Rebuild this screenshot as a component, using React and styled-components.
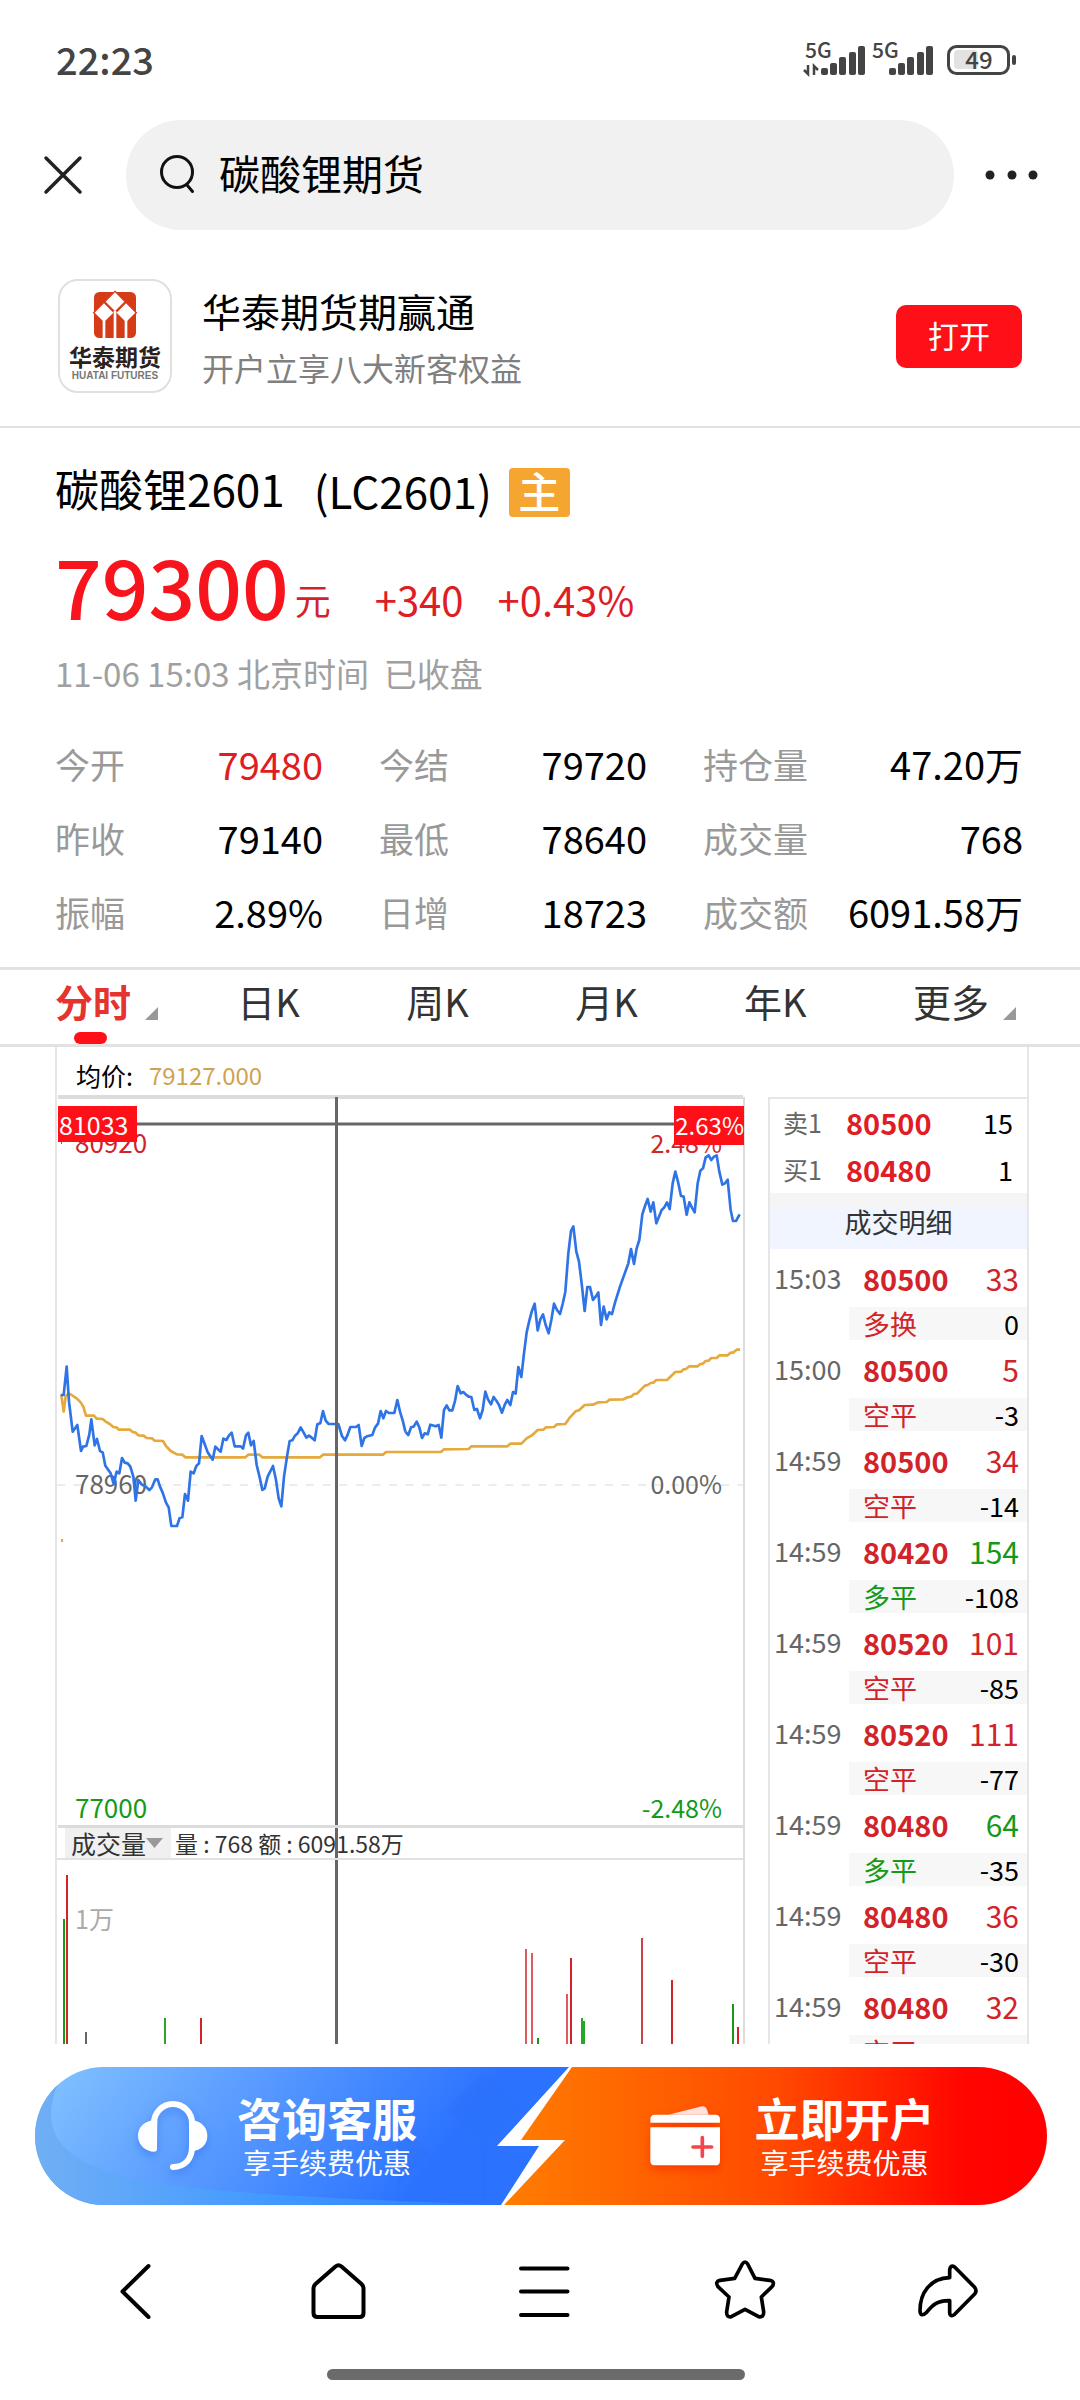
import React, {useState} from 'react';
import styled, {createGlobalStyle} from 'styled-components';

const GlobalStyle = createGlobalStyle`
  * {
    box-sizing: border-box;
  }
  body {
    margin: 0;
    background: #fff;
    color: #000;
    font-family: "Noto Sans CJK SC", "Noto Sans", sans-serif;
  }
  button, input, select {
    font-family: inherit;
    color: inherit;
    border: 0;
    padding: 0;
    margin: 0;
    background: none;
    outline: none;
  }
  svg {
    display: block;
    overflow: visible;
  }
`;

const RED = '#d2232a';
const GREEN = '#149a17';
const LINE = '#e2e2e2';

const Page = styled.div`
  display: flex;
  flex-direction: column;
  height: 100vh;
  overflow: hidden;
`;

/* ---------- top ---------- */

const StatusBar = styled.div`
  display: flex;
  flex: none;
  align-items: center;
  justify-content: space-between;
  height: 116px;
  padding: 2px 63px 0 56px;
  font-size: 38px;
  font-weight: 500;
  line-height: 40px;
  color: #444;
`;

const SearchRow = styled.header`
  display: flex;
  flex: none;
  align-items: center;
  margin-top: 4px;
  padding: 0 42px 0 44px;
`;

const IconButton = styled.button`
  flex: none;
  cursor: pointer;
`;

const SearchBox = styled.label`
  display: flex;
  flex: 1;
  align-items: center;
  gap: 24px;
  height: 110px;
  margin: 0 31px 0 44px;
  padding: 0 34px;
  border-radius: 55px;
  background: #f1f1f1;
`;

const SearchInput = styled.input`
  flex: 1;
  min-width: 0;
  height: 66px;
  padding-bottom: 6px;
  font-size: 41px;
  line-height: 60px;
`;

const Promo = styled.section`
  display: flex;
  flex: none;
  align-items: center;
  padding: 49px 58px 33px;
  border-bottom: 2px solid ${LINE};
`;

const LogoCard = styled.div`
  display: flex;
  flex-direction: column;
  align-items: center;
  width: 114px;
  height: 114px;
  padding-top: 11px;
  border: 2px solid #e0e0e0;
  border-radius: 20px;
`;

const LogoName = styled.span`
  margin-top: 5px;
  font-size: 23px;
  font-weight: 700;
  line-height: 26px;
  white-space: nowrap;
  color: #2b2120;
`;

const LogoSub = styled.span`
  font: bold 10px/14px "Liberation Sans", sans-serif;
  white-space: nowrap;
  color: #777;
`;

const PromoText = styled.div`
  flex: 1;
  margin-left: 30px;
`;

const PromoTitle = styled.div`
  font-size: 39px;
  line-height: 62px;
`;

const PromoSub = styled.div`
  font-size: 32px;
  line-height: 52px;
  color: #808080;
`;

const OpenButton = styled.button`
  width: 126px;
  height: 63px;
  padding-bottom: 3px;
  border-radius: 10px;
  background: #ff1018;
  color: #fff;
  font-size: 31px;
  line-height: 60px;
  cursor: pointer;
`;

/* ---------- quote ---------- */

const Quote = styled.section`
  flex: none;
  padding: 40px 57px 18px 55px;
  border-bottom: 3px solid ${LINE};
`;

const Title = styled.h1`
  display: flex;
  align-items: center;
  height: 49px;
  margin: 0;
  font-size: 44px;
  font-weight: 400;
  line-height: 48px;
`;

const Name = styled.span`
  padding-bottom: 10px;
`;

const Code = styled.span`
  margin: 0 17px 0 29px;
  padding-bottom: 6px;
`;

const MainTag = styled.span`
  width: 61px;
  height: 49px;
  border-radius: 4px;
  background: #f5a631;
  color: #fff;
  font-size: 42px;
  font-weight: 500;
  line-height: 44px;
  text-align: center;
`;

const PriceRow = styled.div`
  display: flex;
  align-items: flex-end;
  height: 100px;
  margin-top: 18px;
  color: ${RED};
`;

const Price = styled.span`
  font-size: 82px;
  font-weight: 500;
  line-height: 100px;
  color: #f8141d;
`;

const Delta = styled.span`
  margin: 0 0 16px ${p => p.$gap}px;
  font-size: ${p => p.$size || 40}px;
  line-height: 40px;
  color: ${p => p.$size ? RED : '#e01c24'};
`;

const Stamp = styled.p`
  margin: 18px 0 34px;
  font-size: 33px;
  line-height: 40px;
  color: #a0a0a0;
`;

const Stats = styled.dl`
  display: grid;
  grid-template-columns: 268fr 268fr 320fr;
  column-gap: 56px;
  margin: 0;
`;

const Stat = styled.div`
  display: flex;
  align-items: center;
  justify-content: space-between;
  height: 74px;
  line-height: 74px;
  white-space: nowrap;

  dt {
    font-size: 35px;
    color: #999;
  }
  dd {
    margin: 0;
    font-size: 38px;
    color: ${p => p.$up ? '#e01c24' : '#000'};
  }
`;

/* ---------- tabs ---------- */

const Tabs = styled.nav`
  display: flex;
  flex: none;
  justify-content: space-between;
  height: 77px;
  padding: 0 91px 0 55px;
  border-bottom: 3px solid ${LINE};
`;

const Tab = styled.button`
  position: relative;
  height: 74px;
  padding-bottom: 12px;
  font-size: 38px;
  font-weight: ${p => p.$active ? 700 : 400};
  line-height: 60px;
  color: ${p => p.$active ? '#e5332d' : '#333'};
  cursor: pointer;

  &::after {
    content: "";
    display: ${p => p.$active ? 'block' : 'none'};
    position: absolute;
    left: 19px;
    bottom: 0;
    width: 33px;
    height: 12px;
    border-radius: 6px;
    background: #ff1018;
  }
`;

const Corner = styled.svg`
  position: absolute;
  right: -27px;
  bottom: 24px;
`;

/* ---------- chart area ---------- */

const Board = styled.main`
  flex: 1;
  min-height: 0;
  margin: 0 51px 0 55px;
  overflow: hidden;
  border: solid #e6e6e6;
  border-width: 0 2px;
`;

const Average = styled.div`
  display: flex;
  gap: 16px;
  height: 50px;
  padding-left: 19px;
  font-size: 25px;
  line-height: 56px;

  b {
    font-size: 24px;
    font-weight: 400;
    color: #cfa24f;
  }
`;

const Columns = styled.div`
  display: grid;
  grid-template-columns: 688fr 259fr;
  column-gap: 23px;
  align-items: stretch;
`;

const ChartPane = styled.div`
  border-right: 2px solid #dcdcdc;

  > svg {
    width: 100%;
    height: auto;
  }
`;

const VolumeBar = styled.div`
  display: flex;
  align-items: center;
  height: 32px;
  border-bottom: 2px solid ${LINE};
  font-size: 23px;
  line-height: 30px;
  color: #333;
  background: linear-gradient(#666, #666) 278px 0 / 3px 100% no-repeat;
`;

const IndicatorPick = styled.label`
  display: flex;
  align-items: center;
  width: 106px;
  height: 30px;
  margin: 0 4px 0 8px;
  padding-left: 6px;
  background: #f0f0f0;

  select {
    width: 75px;
    height: 30px;
    appearance: none;
    font-size: 25px;
    line-height: 30px;
  }
`;

const Depth = styled.aside`
  border: solid #e6e6e6;
  border-width: 2px 0 0 2px;
`;

const Orders = styled.table`
  width: 100%;
  table-layout: fixed;
  border-collapse: collapse;
  font-size: 27px;

  th, td {
    padding: 0;
    font-weight: 400;
    text-align: left;
    white-space: nowrap;
  }
`;

const BookRow = styled.tr`
  height: 47px;
  line-height: 47px;

  th {
    width: 76px;
    padding-left: 13px;
    font-size: 25px;
    color: #666;
  }
  td:last-child {
    padding-right: 14px;
    text-align: right;
  }
`;

const BookPrice = styled.td`
  && {
    font-size: 29px;
    font-weight: 700;
    color: #e01c24;
  }
`;

const DetailHead = styled.h2`
  margin: 0;
  height: 56px;
  border-top: 15px solid #f5f5f5;
  background: #f0f5ff;
  font-size: 27px;
  font-weight: 400;
  line-height: 28px;
  text-align: center;
  color: #333;
`;

const DealRow = styled.tr`
  height: 58px;
  line-height: 56px;

  th {
    width: 79px;
    padding-left: 4px;
    color: #666;
  }
  td {
    padding-left: 14px;
    font-size: 29px;
    font-weight: 700;
    color: ${RED};
  }
  td:last-child {
    padding: 0 8px 0 0;
    font-size: 30px;
    font-weight: 400;
    text-align: right;
    color: ${p => p.$down ? GREEN : RED};
  }
`;

const KindRow = styled.tr`
  height: 33px;
  line-height: 32px;

  td + td {
    padding-left: 14px;
    background: #f7f7f7;
    color: ${p => p.$down ? GREEN : RED};
  }
  td:last-child {
    padding: 0 8px 0 0;
    text-align: right;
    color: #000;
  }
`;

/* ---------- bottom ---------- */

const Banner = styled.div`
  position: relative;
  display: flex;
  flex: none;
  height: 138px;
  margin: 23px 33px 0 35px;
  border-radius: 69px;
  overflow: hidden;
`;

const BannerArt = styled.svg`
  position: absolute;
  inset: 0;
  width: 100%;
  height: 100%;
`;

const BannerButton = styled.button`
  position: relative;
  display: flex;
  flex: 1;
  align-items: center;
  gap: ${p => p.$gap}px;
  padding-left: ${p => p.$start}px;
  color: #fff;
  white-space: nowrap;
  cursor: pointer;

  strong, small {
    display: block;
  }
  strong {
    padding-top: 4px;
    font-size: 45px;
    font-weight: 700;
    line-height: 48px;
  }
  small {
    font-size: 28px;
    line-height: 40px;
  }
  svg {
    filter: drop-shadow(0 4px 5px ${p => p.$shadow});
  }
`;

const NavBar = styled.nav`
  display: flex;
  flex: none;
  justify-content: space-between;
  margin-top: 55px;
  padding: 0 102px 0 105px;
`;

const HomeBar = styled.div`
  flex: none;
  width: 418px;
  height: 11px;
  margin: 49px 0 20px calc(50% - 213px);
  border-radius: 6px;
  background: #6b6b6b;
`;

/* ---------- data ---------- */

const stats = [
    ['今开', '79480', true], ['今结', '79720'], ['持仓量', '47.20万'],
    ['昨收', '79140'], ['最低', '78640'], ['成交量', '768'],
    ['振幅', '2.89%'], ['日增', '18723'], ['成交额', '6091.58万'],
];

const tabs = ['分时', '日K', '周K', '月K', '年K', '更多'];

const deals = [
    ['15:03', '80500', '33', '多换', '0'],
    ['15:00', '80500', '5', '空平', '-3'],
    ['14:59', '80500', '34', '空平', '-14'],
    ['14:59', '80420', '154', '多平', '-108', true],
    ['14:59', '80520', '101', '空平', '-85'],
    ['14:59', '80520', '111', '空平', '-77'],
    ['14:59', '80480', '64', '多平', '-35', true],
    ['14:59', '80480', '36', '空平', '-30'],
    ['14:59', '80480', '32', '空平', '-19'],
];

// both sessions are sampled at three units per pixel, each from its own origin
const MORNING = 'scale(.33333) translate(-21 -51)';
const AFTERNOON = 'scale(.33333) translate(1029 -51)';

const priceAm = '32,945 41,945 50,860 57,965 68,1055 82,1035 93,1113 99,1100 109,1098 118,1063 124,1018 134,1096 141,1077 150,1113 158,1117 166,1157 182,1180 191,1212 200,1175 208,1180 216,1134 224,1148 233,1150 241,1160 250,1190 257,1262 265,1200 275,1213 290,1222 298,1230 306,1222 316,1198 323,1198 330,1220 338,1238 348,1268 356,1282 364,1338 381,1338 389,1314 397,1312 405,1242 414,1262 422,1175 431,1180 439,1158 447,1150 455,1068 464,1092 473,1117 488,1139 496,1100 512,1115 520,1076 529,1080 537,1066 545,1058 554,1099 572,1099 579,1106 588,1066 595,1058 603,1096 611,1083 620,1155 629,1192 637,1230 644,1225 653,1190 669,1158 678,1200 686,1255 694,1279 702,1190 711,1130 719,1083 727,1081 735,1067 743,1060 752,1042 761,1058 769,1073 777,1067 785,1073 794,1081 802,1033 811,1030 819,993 827,1022 836,1032 865,1032 876,1068 885,1081 893,1064 901,1041 918,1041 926,1035 935,1098 943,1074 951,1069 967,1065 975,1043 984,1031 992,993 1000,1015 1008,993 1017,999 1033,999 1042,960 1050,995 1059,1025 1066,1055';
const pricePm = '16,1055 25,1065 33,1042 41,1040 50,1025 58,1042 66,1074 74,1060 83,1063 91,1034 107,1039 116,1035 124,1073 132,990 140,976 148,991 157,991 165,963 173,918 182,940 190,936 198,944 206,950 214,951 223,990 231,987 240,1015 248,990 256,935 264,958 273,973 281,951 289,962 297,975 306,998 314,975 322,960 331,975 339,936 347,941 355,861 364,891 372,820 380,757 388,722 396,692 404,671 413,751 421,718 429,703 437,735 446,760 454,720 462,671 471,690 480,702 488,672 496,635 505,520 513,453 520,439 529,515 537,545 545,610 554,693 562,621 570,621 579,660 587,650 595,637 603,735 611,680 620,718 628,697 636,702 645,668 660,620 685,550 693,507 702,552 710,505 718,480 727,403 735,378 743,357 752,395 760,367 769,430 785,390 793,382 801,367 809,387 818,310 826,275 834,305 843,348 851,350 860,404 868,367 876,383 884,397 893,310 901,272 909,265 917,232 926,226 934,240 942,230 950,226 958,275 967,314 975,310 983,299 992,390 999,423 1008,423 1019,403';
const avgAm = '34,945 41,995 47,950 55,940 65,945 80,955 92,967 100,980 108,1007 132,1007 140,1016 158,1017 166,1024 182,1034 190,1041 199,1042 207,1049 240,1049 248,1056 257,1058 265,1066 281,1067 290,1074 306,1075 314,1082 339,1083 348,1098 362,1113 381,1123 397,1124 406,1132 586,1132 595,1124 628,1124 637,1132 810,1132 819,1124 999,1124 1008,1116 1050,1116';
const avgPm = '0,1116 123,1116 132,1108 206,1107 214,1099 322,1099 331,1091 364,1091 380,1075 397,1065 413,1050 430,1049 438,1042 462,1041 471,1033 496,1032 510,1012 528,993 537,991 554,975 579,974 595,967 620,966 629,959 670,958 685,951 694,950 702,942 711,941 735,917 743,915 752,909 760,908 769,900 801,900 826,876 843,875 851,868 858,867 868,859 893,859 901,852 909,851 917,843 926,842 934,834 950,834 958,826 983,826 992,818 999,818 1010,809 1020,809';

// x, top, colour
const volumes = [
    [7, 59, GREEN], [10, 15, RED], [29, 172, '#666'], [108, 158, '#2aa52c'], [144, 158, RED],
    [469, 89, '#dd5a5f'], [475, 93, '#dd5a5f'], [481, 178, GREEN], [510, 134, '#dd5a5f'], [514, 98, RED],
    [525, 158, '#2aa52c'], [527, 161, '#2aa52c'], [585, 78, '#c94449'], [615, 120, RED],
    [676, 144, GREEN], [681, 167, RED],
];

/* ---------- drawings ---------- */

const Signal = ({x}) => (
    <g fill="#444">
        {[25, 20, 14, 9, 3].map((top, i) => (
            <rect key={top} x={x + i * 9 + (i > 2 ? 1 : 0)} y={top} width="7" height={32 - top} rx="2"/>
        ))}
    </g>
);

const StatusIcons = () => (
    <svg width="214" height="32" viewBox="0 0 214 32" fontWeight="500">
        <text x="2" y="15" fontSize="21" fill="#444">5G</text>
        <path d="M5 22v9l-4-4M11 32V23l4 4" fill="none" stroke="#444" strokeWidth="2.5"/>
        <Signal x={18}/>
        <text x="69" y="15" fontSize="21" fill="#444">5G</text>
        <Signal x={86}/>
        <rect x="151" y="7" width="24" height="19" rx="4" fill="#e2e2e2"/>
        <rect x="145.500" y="3.500" width="60" height="27" rx="8" fill="none" stroke="#444" strokeWidth="3"/>
        <rect x="209" y="12" width="4" height="10" rx="2" fill="#444"/>
        <text x="176" y="26" fontSize="24" textAnchor="middle" fill="#444">49</text>
    </svg>
);

const HuataiMark = () => (
    <svg width="42" height="46" viewBox="132 66 126 138">
        <rect x="132" y="66" width="126" height="138" rx="16" fill="#d63b17"/>
        <path d="M195 64l31 31-31 31-31-31zM162 97l31 31-31 31-31-31zM228 97l31 31-31 31-31-31z" fill="#fff" stroke="#d63b17" strokeWidth="4"/>
        <path d="M162 150v54M195 122v82M228 150v54" stroke="#fff" strokeWidth="8"/>
    </svg>
);

const PriceChart = () => (
    <svg viewBox="0 0 686 731" fontSize="26">
        <path d="M1 0H686" stroke="#dcdcdc" strokeWidth="4"/>
        <path d="M0 388H686" stroke="#ececec" strokeWidth="2" strokeDasharray="8 8.600"/>
        <text x="18" y="56" fill={RED}>80920</text>
        <text x="665" y="56" fontSize="25" textAnchor="end" fill={RED}>2.48%</text>
        <text x="18" y="397" fill="#666">78960</text>
        <text x="665" y="397" fontSize="25" textAnchor="end" fill="#666">0.00%</text>
        <text x="18" y="721" fill={GREEN}>77000</text>
        <text x="665" y="721" fontSize="25" textAnchor="end" fill={GREEN}>-2.48%</text>
        <path d="M4 442h2v3h-2z" fill="#e9a93a"/>
        <path d="M4 42h1v5h-1z" fill="#2f74e6"/>
        <g fill="none" strokeWidth="8" strokeLinejoin="round">
            <g stroke="#e5a93c">
                <polyline transform={MORNING} points={avgAm}/>
                <polyline transform={AFTERNOON} points={avgPm}/>
            </g>
            <g stroke="#2f74e6">
                <polyline transform={MORNING} points={priceAm}/>
                <polyline transform={AFTERNOON} points={pricePm}/>
            </g>
        </g>
        <path d="M1 27H686M279.500 0V731" stroke="#666" strokeWidth="3"/>
        <path d="M1 9h79v36h-79zM617 9h70v39h-70z" fill="#ff1018"/>
        <text x="2" y="38" fontSize="25" fill="#fff">81033</text>
        <text x="687" y="38" fontSize="24" textAnchor="end" fill="#fff">2.63%</text>
        <path d="M1 729.500H686" stroke="#dcdcdc" strokeWidth="3"/>
    </svg>
);

const VolumeChart = () => (
    <svg viewBox="0 0 686 260" fontSize="25">
        <text x="18" y="69" fill="#aaa">1万</text>
        {volumes.map(([x, top, color]) => (
            <rect key={x} x={x - 1} y={top} width="2" height={260 - top} fill={color}/>
        ))}
        <path d="M279.500 0V260" stroke="#666" strokeWidth="3"/>
    </svg>
);

const Headset = () => (
    <svg width="70" height="72" viewBox="325 121 210 216">
        <path d="M373 200V190A57 57 0 0 1 487 190V262C487 298 465 322 430 322" fill="none" stroke="#fff" strokeWidth="18" strokeLinecap="round"/>
        <path d="M383 180L370 181C340 187 325 205 325 228C325 258 350 275 373 276Q382 276 382 268ZM478 180L490 181C518 187 533 205 533 228C533 255 515 270 490 274L478 270Z" fill="#fff"/>
    </svg>
);

const Wallet = () => (
    <svg width="70" height="60" viewBox="330 140 210 180">
        <path d="M385 166L480 142Q496 138 501 151L506 166Z" fill="#ffe0dc"/>
        <path d="M331 190V180Q331 166 345 166H526Q540 166 540 180V190ZM331 204H540V304Q540 318 526 318H345Q331 318 331 304Z" fill="#fff"/>
        <path d="M459 263H515M487 235V291" stroke="#f5444c" strokeWidth="11" strokeLinecap="round"/>
    </svg>
);

const NavIcon = ({d, box = '0 0 60 60', stroke = 4}) => (
    <svg width="60" height="60" viewBox={box} fill="none" stroke="#000" strokeWidth={stroke} strokeLinecap="round" strokeLinejoin="round">
        <path d={d}/>
    </svg>
);

const navItems = [
    {label: '后退', d: 'M43.500 6L17.500 31.500L43.500 57'},
    {label: '主页', d: 'M27.500 6.500Q30.500 4 33.500 6.500L53.500 24Q55.500 26 55.500 28.500V53Q55.500 57 51.500 57H9.500Q5.500 57 5.500 53V28.500Q5.500 26 7.500 24Z'},
    {label: '菜单', d: 'M9 8.500H55.500M9 31.500H55.500M9 55H55.500'},
    {label: '收藏', box: '526 600 180 180', stroke: 11, d: 'M608 612Q616 600 624 612L646 655L690 661Q708 665 697 680L665 711L672 755Q673 773 657 770L616 748L575 770Q560 773 561 755L568 711L535 680Q525 665 541 661L585 655Z'},
    {label: '分享', box: '1135 600 180 180', stroke: 11, d: 'M1230 653V630Q1232 613 1245 621L1305 682Q1313 692 1305 702L1245 763Q1232 773 1230 758V722C1195 721 1180 733 1160 758Q1142 773 1141 752C1141 700 1170 655 1230 653Z'},
];

const App = () => {
    const [keyword, setKeyword] = useState('碳酸锂期货');
    const [active, setActive] = useState('分时');

    return (
        <Page>
            <GlobalStyle/>
            <StatusBar>
                <span>22:23</span>
                <StatusIcons/>
            </StatusBar>

            <SearchRow>
                <IconButton aria-label="关闭">
                    <svg width="38" height="38" viewBox="0 0 38 38" stroke="#222" strokeWidth="3.500" strokeLinecap="round">
                        <path d="M2 2L36 36M36 2L2 36"/>
                    </svg>
                </IconButton>
                <SearchBox>
                    <svg width="35" height="40" viewBox="0 0 35 40" fill="none" stroke="#111" strokeWidth="3" strokeLinecap="round">
                        <circle cx="17" cy="17" r="15.500"/>
                        <path d="M27 30L32.500 36.500"/>
                    </svg>
                    <SearchInput aria-label="搜索" value={keyword} onChange={e => setKeyword(e.target.value)}/>
                </SearchBox>
                <IconButton aria-label="更多选项">
                    <svg width="53" height="12" viewBox="0 0 53 12" fill="#222">
                        <circle cx="5" cy="6" r="4.500"/>
                        <circle cx="27" cy="6" r="4.500"/>
                        <circle cx="48" cy="6" r="4.500"/>
                    </svg>
                </IconButton>
            </SearchRow>

            <Promo>
                <LogoCard>
                    <HuataiMark/>
                    <LogoName>华泰期货</LogoName>
                    <LogoSub>HUATAI FUTURES</LogoSub>
                </LogoCard>
                <PromoText>
                    <PromoTitle>华泰期货期赢通</PromoTitle>
                    <PromoSub>开户立享八大新客权益</PromoSub>
                </PromoText>
                <OpenButton>打开</OpenButton>
            </Promo>

            <Quote>
                <Title>
                    <Name>碳酸锂2601</Name>
                    <Code>(LC2601)</Code>
                    <MainTag>主</MainTag>
                </Title>
                <PriceRow>
                    <Price>79300</Price>
                    <Delta $gap={6} $size={36}>元</Delta>
                    <Delta $gap={44}>+340</Delta>
                    <Delta $gap={34}>+0.43%</Delta>
                </PriceRow>
                <Stamp>11-06 15:03 北京时间&nbsp; 已收盘</Stamp>
                <Stats>
                    {stats.map(([name, value, up]) => (
                        <Stat key={name} $up={up}>
                            <dt>{name}</dt>
                            <dd>{value}</dd>
                        </Stat>
                    ))}
                </Stats>
            </Quote>

            <Tabs>
                {tabs.map(tab => (
                    <Tab key={tab} $active={tab === active} onClick={() => setActive(tab)}>
                        {tab}
                        {(tab === '分时' || tab === '更多') && (
                            <Corner width="13" height="13" viewBox="0 0 13 13">
                                <path d="M13 0V13H0Z" fill="#999"/>
                            </Corner>
                        )}
                    </Tab>
                ))}
            </Tabs>

            <Board>
                <Average>
                    <span>均价:</span>
                    <b>79127.000</b>
                </Average>
                <Columns>
                    <ChartPane>
                        <PriceChart/>
                        <VolumeBar>
                            <IndicatorPick>
                                <select aria-label="指标" defaultValue="成交量">
                                    <option>成交量</option>
                                </select>
                                <svg width="17" height="10" viewBox="0 0 17 10">
                                    <path d="M0 0H17L8.500 10Z" fill="#999"/>
                                </svg>
                            </IndicatorPick>
                            <span>量 : 768 额 : 6091.58万</span>
                        </VolumeBar>
                        <VolumeChart/>
                    </ChartPane>
                    <Depth>
                        <Orders aria-label="买卖盘">
                            <tbody>
                                <BookRow>
                                    <th scope="row">卖1</th>
                                    <BookPrice>80500</BookPrice>
                                    <td>15</td>
                                </BookRow>
                                <BookRow>
                                    <th scope="row">买1</th>
                                    <BookPrice>80480</BookPrice>
                                    <td>1</td>
                                </BookRow>
                            </tbody>
                        </Orders>
                        <DetailHead>成交明细</DetailHead>
                        <Orders aria-label="成交明细">
                            <tbody>
                                {deals.map(([time, price, count, kind, change, down], i) => (
                                    <React.Fragment key={i}>
                                        <DealRow $down={down}>
                                            <th scope="row">{time}</th>
                                            <td>{price}</td>
                                            <td>{count}</td>
                                        </DealRow>
                                        <KindRow $down={down}>
                                            <td/>
                                            <td>{kind}</td>
                                            <td>{change}</td>
                                        </KindRow>
                                    </React.Fragment>
                                ))}
                            </tbody>
                        </Orders>
                    </Depth>
                </Columns>
            </Board>

            <Banner>
                <BannerArt viewBox="0 0 1012 138" preserveAspectRatio="none">
                    <defs>
                        <linearGradient id="blue" x1="0" x2="1" y1="0" y2=".2">
                            <stop offset="0" stopColor="#84c4ff"/>
                            <stop offset=".45" stopColor="#5698ff"/>
                            <stop offset=".85" stopColor="#2b73ff"/>
                        </linearGradient>
                        <linearGradient id="rim">
                            <stop offset="0" stopColor="#70aff5"/>
                            <stop offset=".5" stopColor="#429aff"/>
                            <stop offset="1" stopColor="#2b7dff"/>
                        </linearGradient>
                        <linearGradient id="hot">
                            <stop offset="0" stopColor="#ff7d00"/>
                            <stop offset=".5" stopColor="#ff4a00"/>
                            <stop offset=".85" stopColor="#ff0500"/>
                            <stop offset="1" stopColor="#ff0000"/>
                        </linearGradient>
                    </defs>
                    <path d="M0 0H534L462 79H504L466 138H0Z" fill="url(#blue)"/>
                    <path d="M0 0H32Q16 25 16 48C16 80 45 98 95 111C170 128 330 132 462 138H0Z" fill="url(#rim)"/>
                    <path d="M448 6L486 42L448 78L410 42ZM446 78h6v60h-6zM362 52l32 34-32 34z" fill="#2a63da" opacity=".12"/>
                    <path d="M537 0L486 73H530L469 138H1012V0Z" fill="url(#hot)"/>
                </BannerArt>
                <BannerButton $start={103} $gap={29} $shadow="#2b6cf088">
                    <Headset/>
                    <span>
                        <strong>咨询客服</strong>
                        <small>享手续费优惠</small>
                    </span>
                </BannerButton>
                <BannerButton $start={114} $gap={35} $shadow="#f01c0088">
                    <Wallet/>
                    <span>
                        <strong>立即开户</strong>
                        <small>享手续费优惠</small>
                    </span>
                </BannerButton>
            </Banner>

            <NavBar>
                {navItems.map(({label, ...icon}) => (
                    <IconButton key={label} aria-label={label}>
                        <NavIcon {...icon}/>
                    </IconButton>
                ))}
            </NavBar>
            <HomeBar/>
        </Page>
    );
};

export default App;
